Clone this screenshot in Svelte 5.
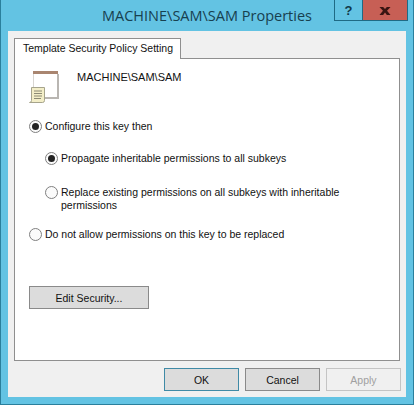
<script>
  const title = 'MACHINE\\SAM\\SAM';
</script>

<div class="window">
  <div class="titlebar">
    <span class="title">{title} Properties</span>
    <div class="controls">
      <span class="help">?</span>
      <span class="close">
        <svg width="12" height="8" viewBox="0 0 13 10" preserveAspectRatio="none"><path d="M0.500 0h4l2 2.600L8.500 0h4L8.700 4.800 12.500 10h-4L6.500 7 4.500 10h-4l3.800-5.200z" fill="#3a1512"/></svg>
      </span>
    </div>
  </div>

  <div class="client">
    <div class="tabs">
      <div class="tab">Template Security Policy Setting</div>
    </div>
    <div class="panel">
      <div class="head">
        <svg class="doc" width="34" height="34" viewBox="0 0 34 34">
          <rect x="5.500" y="1.500" width="24" height="27" fill="#fff" stroke="#d9d6d2"/>
          <rect x="5" y="1" width="25" height="3" fill="#a98570"/>
          <rect x="29" y="4" width="2" height="25" fill="#b9b6b2"/>
          <rect x="12" y="27" width="19" height="2" fill="#b9b6b2"/>
          <path d="M3.500 17.500h13v13q0 2-2 2h-13q2 0 2-2z" fill="#f3eec8" stroke="#a6a48c"/>
          <path d="M6 21h8M6 23.500h8M6 26h8M6 28.500h7" stroke="#8c8a74"/>
        </svg>
        <span class="path">{title}</span>
      </div>

      <label class="opt first"><span class="radio on"></span>Configure this key then</label>
      <div class="sub">
        <label class="opt"><span class="radio on"></span>Propagate inheritable permissions to all subkeys</label>
        <label class="opt two"><span class="radio"></span><span>Replace existing permissions on all subkeys with inheritable permissions</span></label>
      </div>
      <label class="opt last"><span class="radio"></span>Do not allow permissions on this key to be replaced</label>

      <button class="btn edit" type="button">Edit Security...</button>
    </div>
    <div class="footer">
      <button class="btn ok" type="button">OK</button>
      <button class="btn" type="button">Cancel</button>
      <button class="btn apply" type="button" disabled>Apply</button>
    </div>
  </div>
</div>

<style>
  :global(body) {
    margin: 0;
    background: #63c3e3;
  }

  .window {
    width: 414px;
    height: 405px;
    box-sizing: border-box;
    display: flex;
    flex-direction: column;
    background: #63c3e3;
    border: 1px solid #2a7f9c;
    border-top: 0;
    font-family: "Liberation Sans", Arial, sans-serif;
    font-size: 10.500px;
    color: #111;
  }

  .titlebar {
    height: 31px;
    flex: none;
    position: relative;
    text-align: center;
  }

  .title {
    display: block;
    padding: 6px 0 0 0;
    font-family: "Open Sans", sans-serif;
    font-size: 14.500px;
    line-height: 20px;
    color: #17404f;
  }

  .controls {
    position: absolute;
    top: 0;
    right: 5px;
    display: flex;
    height: 21px;
  }

  .help {
    width: 28px;
    box-sizing: border-box;
    border: 1px solid #1f6a85;
    border-top: 0;
    border-right: 0;
    text-align: center;
    font: bold 13px/22px "Liberation Sans", sans-serif;
    color: #10384a;
  }

  .close {
    width: 46px;
    box-sizing: border-box;
    background: #c75f55;
    border: 1px solid #1f6a85;
    border-top: 0;
    padding-top: 2px;
    display: flex;
    align-items: center;
    justify-content: center;
  }

  .client {
    flex: 1;
    margin: 0 7px 7px 7px;
    background: #f0f0f0;
    padding: 7px 6px 0 6px;
    display: flex;
    flex-direction: column;
  }

  .tabs {
    height: 20px;
    flex: none;
    display: flex;
    position: relative;
    z-index: 1;
  }

  .tab {
    width: 167px;
    height: 21px;
    box-sizing: border-box;
    background: #fff;
    border: 1px solid #8f8f8f;
    border-bottom: 0;
    padding: 0 0 0 8px;
    line-height: 18px;
    white-space: nowrap;
  }

  .panel {
    height: 303px;
    flex: none;
    box-sizing: border-box;
    background: #fff;
    border: 1px solid #8f8f8f;
    padding: 8px 14px 0 14px;
    display: flex;
    flex-direction: column;
    align-items: flex-start;
  }

  .head {
    display: flex;
    align-items: flex-start;
    height: 40px;
    margin-left: -1px;
  }

  .doc {
    margin: 3px 15px 0 0;
  }

  .path {
    font-size: 11px;
    line-height: 18px;
    margin: 1px 0 0 0;
  }

  .opt {
    display: flex;
    align-items: flex-start;
    gap: 3px;
    line-height: 13px;
    min-height: 13px;
  }

  .opt.first {
    margin-top: 13px;
  }

  .sub {
    padding: 19px 0 0 16px;
    display: flex;
    flex-direction: column;
    gap: 21px;
  }

  .opt.two {
    width: 330px;
  }

  .opt.last {
    margin-top: 16px;
  }

  .radio {
    width: 13px;
    height: 13px;
    flex: none;
    box-sizing: border-box;
    border: 1px solid #808080;
    border-radius: 50%;
    background: #fbfbfb;
    position: relative;
  }

  .radio.on::after {
    content: '';
    position: absolute;
    left: 2px;
    top: 2px;
    width: 7px;
    height: 7px;
    border-radius: 50%;
    background: #222;
  }

  .btn {
    width: 75px;
    height: 23px;
    flex: none;
    box-sizing: border-box;
    padding: 0;
    background: #dcdcdc;
    border: 1px solid #8a8a8a;
    border-radius: 0;
    font: inherit;
    color: #111;
  }

  .edit {
    width: 120px;
    margin-top: 45px;
  }

  .footer {
    display: flex;
    justify-content: flex-end;
    gap: 6px;
    padding-top: 7px;
    margin-right: -1px;
  }

  .ok {
    border-color: #3f8aa6;
  }

  .apply {
    background: #f0f0f0;
    border-color: #c4c4c4;
    color: #a0a0a0;
  }
</style>
